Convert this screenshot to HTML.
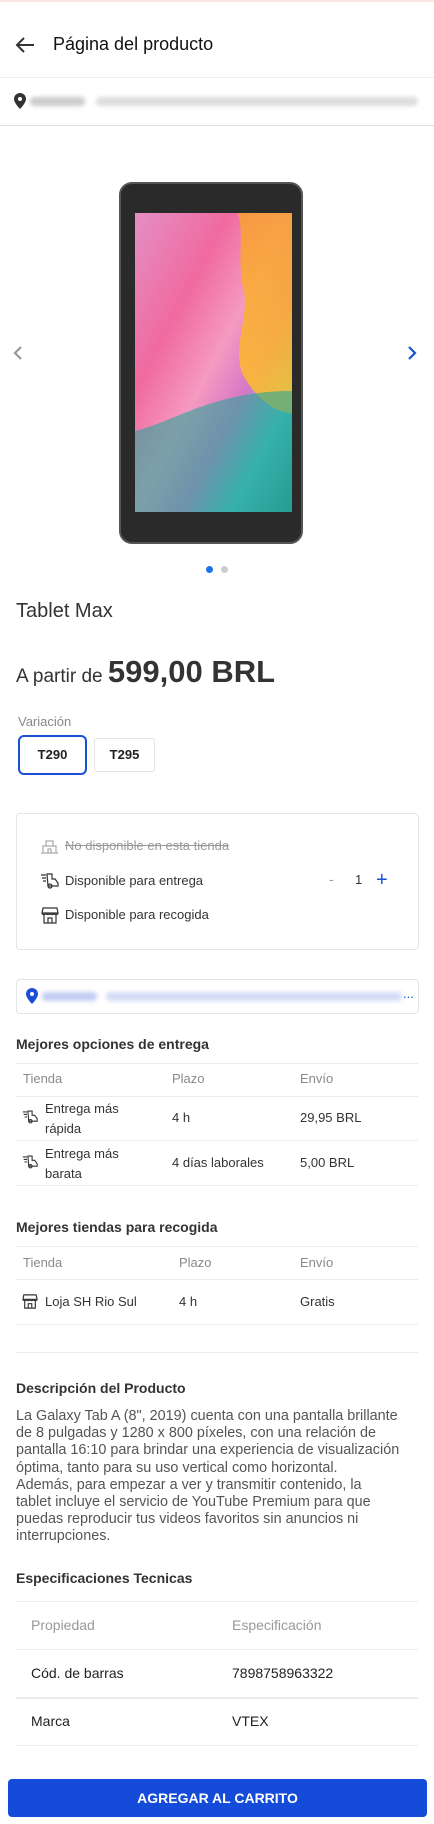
<!DOCTYPE html>
<html><head><meta charset="utf-8"><style>
*{margin:0;padding:0;box-sizing:border-box}
body{width:434px;height:1824px;background:#fff;font-family:"Liberation Sans",sans-serif;color:#222;position:relative;overflow:hidden}
.a{position:absolute;white-space:nowrap}
.hl{position:absolute;left:16px;right:16px;height:1px;background:#ececec}
.th{color:#8a8a8a;font-size:13px}
.td{font-size:13px;color:#333}
.h3{font-size:14px;font-weight:bold;color:#333}
.blur{position:absolute;height:9px;border-radius:4px;filter:blur(2px)}
</style></head><body>
<div class="a" style="left:0;top:0;width:434px;height:2px;background:#fde3e3"></div>
<svg class="a" style="left:14px;top:36px" width="22" height="18" viewBox="0 0 22 18"><path d="M20 9H3M10 2L3 9l7 7" fill="none" stroke="#333" stroke-width="2"/></svg>
<div class="a" style="left:53px;top:34px;font-size:18px;color:#111">Página del producto</div>
<div class="hl" style="left:0;right:0;top:77px"></div>
<svg class="a" style="left:14px;top:93px" width="12" height="16" viewBox="0 0 12 16"><path d="M6 0a6 6 0 0 0-6 6c0 4 6 10 6 10s6-6 6-10a6 6 0 0 0-6-6z" fill="#333"/><circle cx="6" cy="6" r="2" fill="#fff"/></svg>
<div class="blur" style="left:30px;top:97px;width:55px;background:#ccc"></div>
<div class="blur" style="left:96px;top:97px;width:322px;background:#ddd"></div>
<div class="hl" style="left:0;right:0;top:125px;background:#ddd"></div>
<svg class="a" style="left:12px;top:344px" width="12" height="18" viewBox="0 0 12 18"><path d="M9 3L3 9l6 6" fill="none" stroke="#999" stroke-width="2.2"/></svg>
<svg class="a" style="left:406px;top:344px" width="12" height="18" viewBox="0 0 12 18"><path d="M3 3l6 6-6 6" fill="none" stroke="#1a4fd6" stroke-width="2.2"/></svg>
<svg class="a" style="left:118px;top:181px" width="186" height="364" viewBox="0 0 186 364">
<defs><linearGradient id="g" x1="0" y1="0" x2="1" y2="1"><stop offset="0" stop-color="#e48fc4"/><stop offset=".3" stop-color="#f06aa0"/><stop offset=".5" stop-color="#f59ac0"/><stop offset=".65" stop-color="#d577c6"/><stop offset=".8" stop-color="#4cc3c9"/><stop offset="1" stop-color="#1f8f86"/></linearGradient>
<linearGradient id="o" x1="0" y1="0" x2="0" y2="1"><stop offset="0" stop-color="#f7a030"/><stop offset="1" stop-color="#ffc22a"/></linearGradient></defs>
<rect x="2" y="2" width="182" height="360" rx="12" fill="#2a2a2a" stroke="#555" stroke-width="2"/>
<rect x="17" y="32" width="157" height="299" fill="url(#g)"/>
<path d="M120 32h54v200c-20 0-40-20-50-40-10-30 10-60 0-90-4-30 2-50-4-70z" fill="url(#o)" opacity=".85"/>
<path d="M17 250c40-10 80-40 157-40v121H17z" fill="#2aa59a" opacity=".6"/>
</svg>
<div class="a" style="left:206px;top:566px;width:7px;height:7px;border-radius:50%;background:#1a73e8"></div>
<div class="a" style="left:221px;top:566px;width:7px;height:7px;border-radius:50%;background:#ccc"></div>
<div class="a" style="left:16px;top:600px;font-size:20px;color:#333">Tablet Max</div>
<div class="a" style="left:16px;top:654px;color:#333"><span style="font-size:19px">A partir de </span><span style="font-size:31px;font-weight:bold">599,00 BRL</span></div>
<div class="a" style="left:18px;top:714px;font-size:13px;color:#888">Variación</div>
<div class="a" style="left:18px;top:735px;width:69px;height:40px;border:2px solid #1a4fd6;border-radius:6px;font-size:13px;font-weight:bold;text-align:center;line-height:36px">T290</div>
<div class="a" style="left:94px;top:738px;width:61px;height:34px;border:1px solid #e5e5e5;border-radius:3px;font-size:13px;font-weight:bold;text-align:center;line-height:32px">T295</div>
<div class="a" style="left:16px;top:813px;width:403px;height:137px;border:1px solid #e5e5e5;border-radius:4px"></div>
<svg class="a" style="left:40px;top:838px" width="19" height="16" viewBox="0 0 19 16" fill="none" stroke="#aaa" stroke-width="1.2"><path d="M1 15h17M3 15V8h13v7M6 8V3h7v5M8 15v-4h3v4"/></svg>
<div class="a" style="left:65px;top:838px;font-size:13px;color:#999;text-decoration:line-through">No disponible en esta tienda</div>
<svg class="a" style="left:40px;top:873px" width="19" height="16" viewBox="0 0 19 16" fill="none" stroke="#333" stroke-width="1.2"><path d="M1 2h5M2 5h4M3 8h3M7 1h5v5h3l3 4v3H8z"/><circle cx="10" cy="13" r="2"/></svg>
<div class="a" style="left:65px;top:873px;font-size:13px;color:#333">Disponible para entrega</div>
<div class="a" style="left:329px;top:871px;font-size:14px;color:#999">-</div>
<div class="a" style="left:355px;top:872px;font-size:13px;color:#333">1</div>
<div class="a" style="left:376px;top:869px;font-size:20px;color:#1a4fd6">+</div>
<svg class="a" style="left:41px;top:907px" width="18" height="17" viewBox="0 0 18 17" fill="none" stroke="#333" stroke-width="1.2"><path d="M2 1h14l1 5H1z M1 6c0 2 4 2 4 0 0 2 4 2 4 0 0 2 4 2 4 0 0 2 4 2 4 0M3 8v8h12V8M7 16v-5h4v5"/></svg>
<div class="a" style="left:65px;top:907px;font-size:13px;color:#333">Disponible para recogida</div>
<div class="a" style="left:16px;top:979px;width:403px;height:35px;border:1px solid #e5e5e5;border-radius:4px"></div>
<svg class="a" style="left:26px;top:988px" width="12" height="16" viewBox="0 0 12 16"><path d="M6 0a6 6 0 0 0-6 6c0 4 6 10 6 10s6-6 6-10a6 6 0 0 0-6-6z" fill="#1a4fd6"/><circle cx="6" cy="6" r="2" fill="#fff"/></svg>
<div class="blur" style="left:42px;top:992px;width:55px;background:#c3cdf3"></div>
<div class="blur" style="left:106px;top:992px;width:296px;background:#d4dcf6"></div>
<div class="a" style="left:403px;top:986px;font-size:13px;color:#1a4fd6">...</div>
<div class="a h3" style="left:16px;top:1036px">Mejores opciones de entrega</div>
<div class="hl" style="top:1063px"></div>
<div class="a th" style="left:23px;top:1071px">Tienda</div><div class="a th" style="left:172px;top:1071px">Plazo</div><div class="a th" style="left:300px;top:1071px">Envío</div>
<div class="hl" style="top:1096px"></div>
<svg class="a" style="left:22px;top:1110px" width="16" height="14" viewBox="0 0 19 16" fill="none" stroke="#333" stroke-width="1.3"><path d="M1 2h5M2 5h4M3 8h3M7 1h5v5h3l3 4v3H8z"/><circle cx="10" cy="13" r="2"/></svg>
<div class="a td" style="left:45px;top:1099px;line-height:20px">Entrega más<br>rápida</div>
<div class="a td" style="left:172px;top:1110px">4 h</div><div class="a td" style="left:300px;top:1110px">29,95 BRL</div>
<div class="hl" style="top:1140px"></div>
<svg class="a" style="left:22px;top:1155px" width="16" height="14" viewBox="0 0 19 16" fill="none" stroke="#333" stroke-width="1.3"><path d="M1 2h5M2 5h4M3 8h3M7 1h5v5h3l3 4v3H8z"/><circle cx="10" cy="13" r="2"/></svg>
<div class="a td" style="left:45px;top:1144px;line-height:20px">Entrega más<br>barata</div>
<div class="a td" style="left:172px;top:1155px">4 días laborales</div><div class="a td" style="left:300px;top:1155px">5,00 BRL</div>
<div class="hl" style="top:1185px"></div>
<div class="a h3" style="left:16px;top:1219px">Mejores tiendas para recogida</div>
<div class="hl" style="top:1246px"></div>
<div class="a th" style="left:23px;top:1255px">Tienda</div><div class="a th" style="left:179px;top:1255px">Plazo</div><div class="a th" style="left:300px;top:1255px">Envío</div>
<div class="hl" style="top:1279px"></div>
<svg class="a" style="left:22px;top:1294px" width="16" height="15" viewBox="0 0 18 17" fill="none" stroke="#333" stroke-width="1.3"><path d="M2 1h14l1 5H1z M1 6c0 2 4 2 4 0 0 2 4 2 4 0 0 2 4 2 4 0 0 2 4 2 4 0M3 8v8h12V8M7 16v-5h4v5"/></svg>
<div class="a td" style="left:45px;top:1294px">Loja SH Rio Sul</div>
<div class="a td" style="left:179px;top:1294px">4 h</div><div class="a td" style="left:300px;top:1294px">Gratis</div>
<div class="hl" style="top:1324px"></div>
<div class="hl" style="top:1352px"></div>
<div class="a h3" style="left:16px;top:1380px">Descripción del Producto</div>
<div class="a" style="left:16px;top:1408px;font-size:14.4px;line-height:17.2px;color:#555">La Galaxy Tab A (8", 2019) cuenta con una pantalla brillante<br>de 8 pulgadas y 1280 x 800 píxeles, con una relación de<br>pantalla 16:10 para brindar una experiencia de visualización<br>óptima, tanto para su uso vertical como horizontal.<br>Además, para empezar a ver y transmitir contenido, la<br>tablet incluye el servicio de YouTube Premium para que<br>puedas reproducir tus videos favoritos sin anuncios ni<br>interrupciones.</div>
<div class="a h3" style="left:16px;top:1570px">Especificaciones Tecnicas</div>
<div class="hl" style="top:1601px"></div>
<div class="a" style="left:31px;top:1617px;font-size:14px;color:#999">Propiedad</div><div class="a" style="left:232px;top:1617px;font-size:14px;color:#999">Especificación</div>
<div class="hl" style="top:1649px"></div>
<div class="a" style="left:31px;top:1665px;font-size:14px;color:#222">Cód. de barras</div><div class="a" style="left:232px;top:1665px;font-size:14px;color:#222">7898758963322</div>
<div class="hl" style="top:1697px;height:2px"></div>
<div class="a" style="left:31px;top:1713px;font-size:14px;color:#222">Marca</div><div class="a" style="left:232px;top:1713px;font-size:14px;color:#222">VTEX</div>
<div class="hl" style="top:1745px"></div>
<div class="a" style="left:8px;top:1779px;width:419px;height:38px;background:#144bd9;border-radius:4px;color:#fff;font-size:14px;font-weight:bold;text-align:center;line-height:38px">AGREGAR AL CARRITO</div>
</body></html>
